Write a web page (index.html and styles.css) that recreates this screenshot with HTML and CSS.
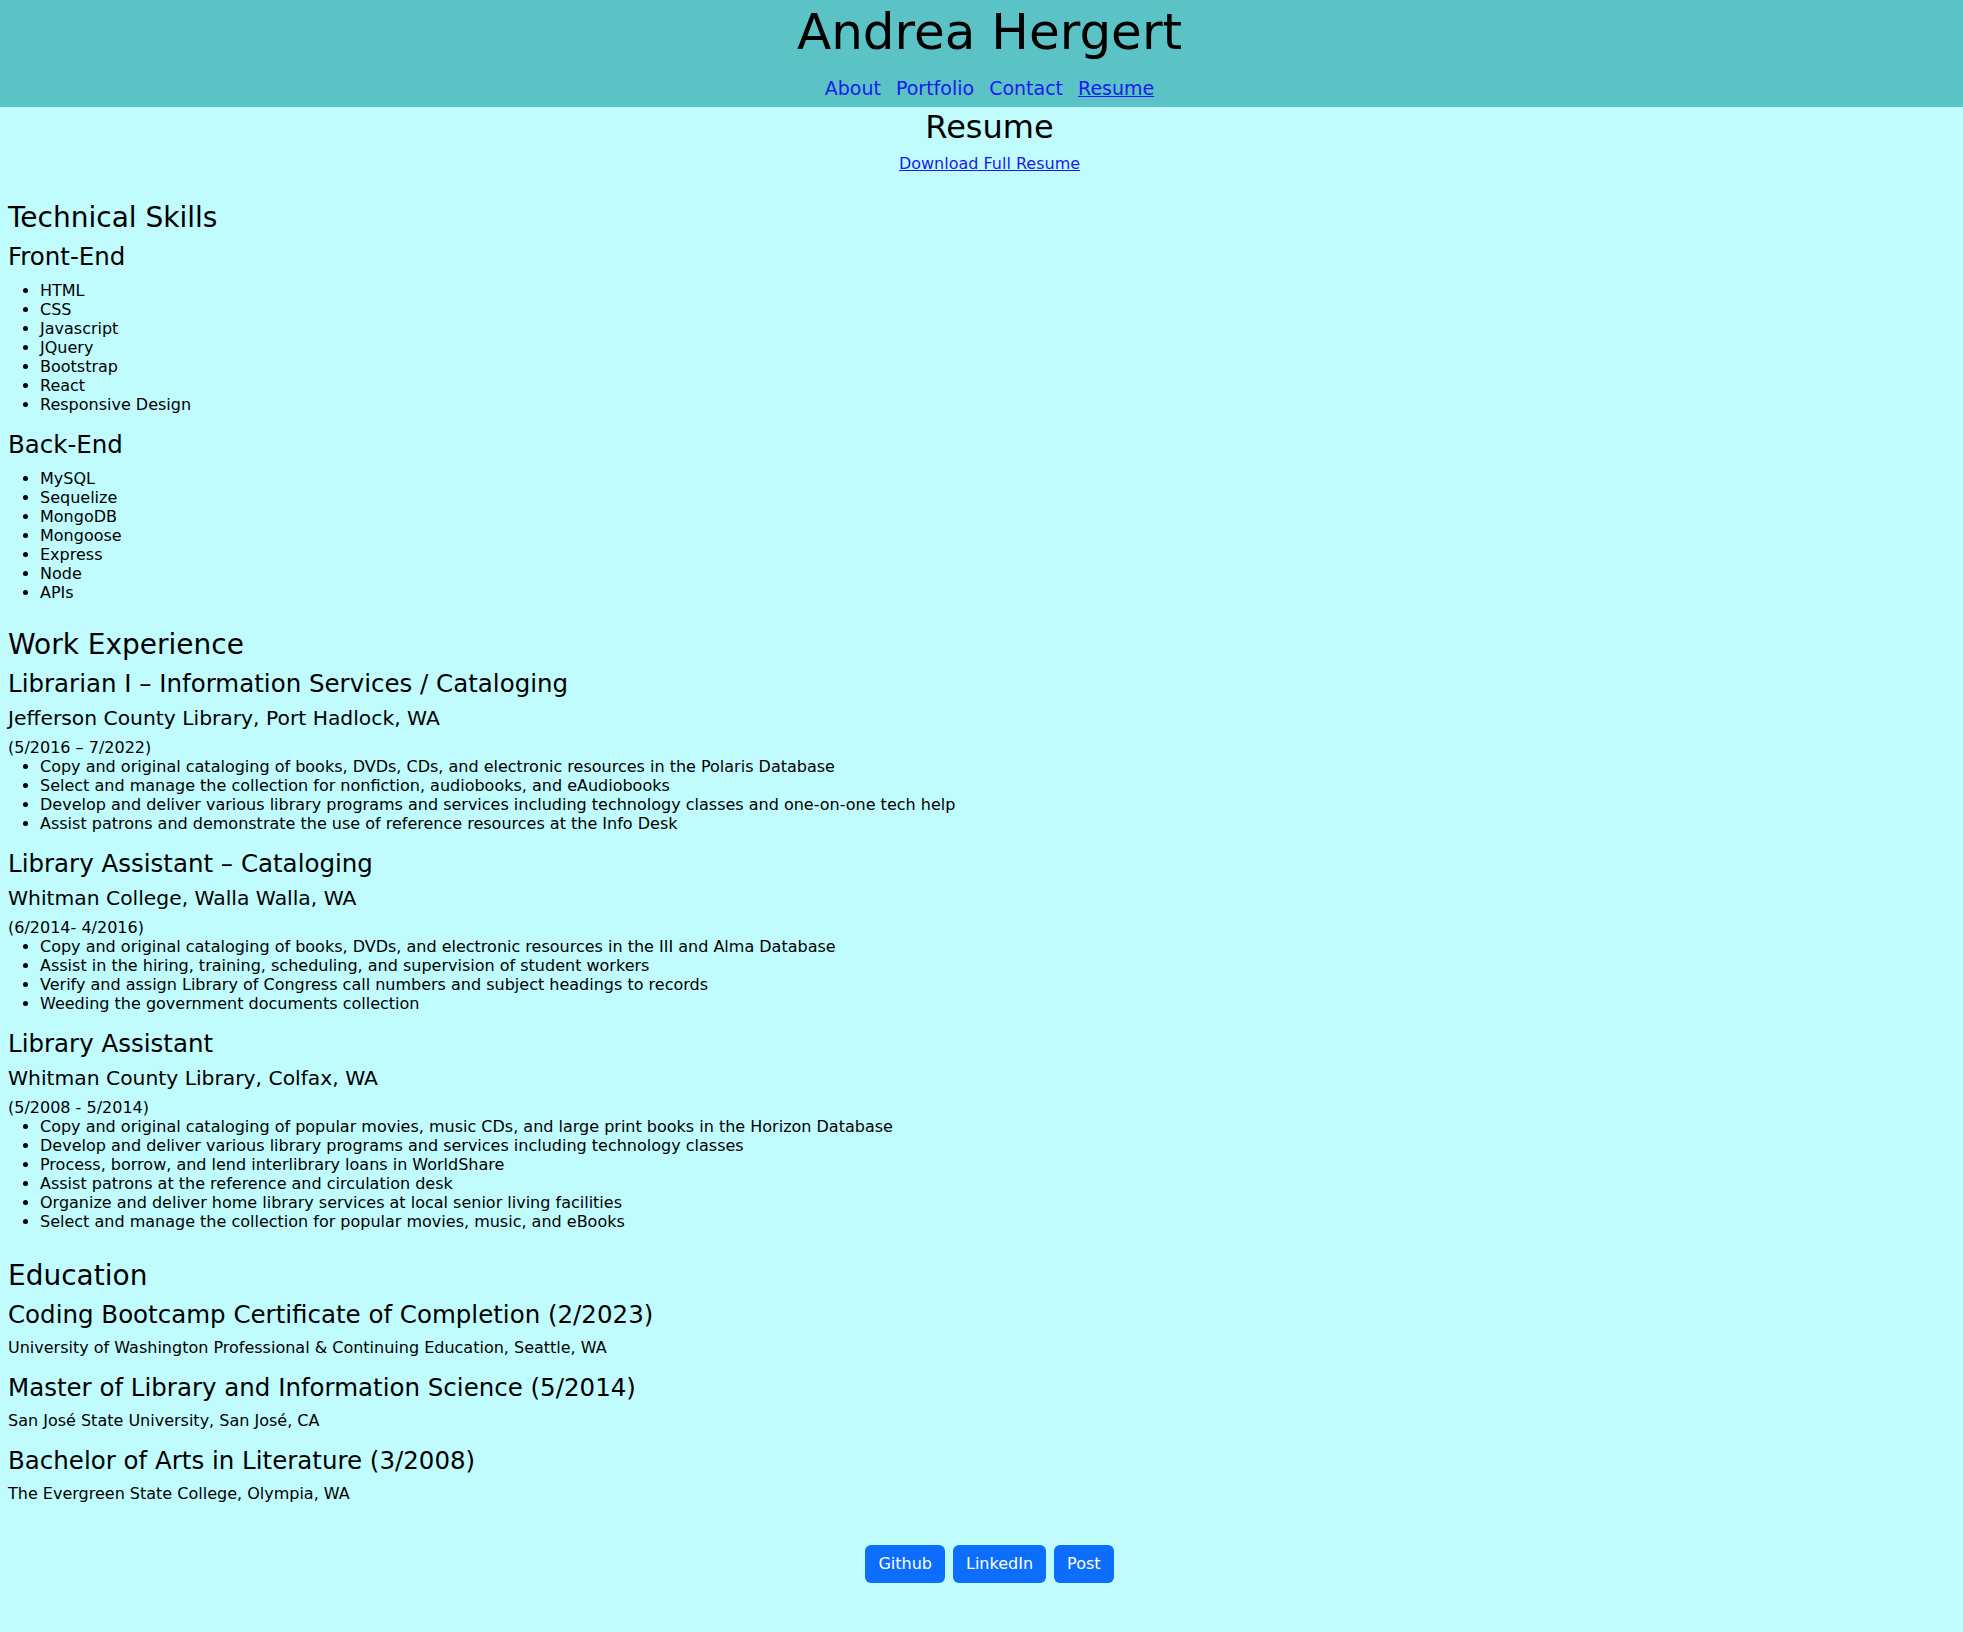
FILE: index.html
```html
<!DOCTYPE html>
<html lang="en">
<head>
<meta charset="utf-8">
<title>Andrea Hergert - Resume</title>
<link rel="stylesheet" href="styles.css">
</head>
<body>
<header class="site-header">
  <h1 class="site-title">Andrea Hergert</h1>
  <nav class="site-nav">
    <a href="#" class="nav-link">About</a>
    <a href="#" class="nav-link">Portfolio</a>
    <a href="#" class="nav-link">Contact</a>
    <a href="#" class="nav-link active">Resume</a>
  </nav>
</header>
<main class="resume">
  <div class="page-head">
    <h2 class="page-title">Resume</h2>
    <a href="#" class="download">Download Full Resume</a>
  </div>

  <section class="section">
    <h2 class="section-title">Technical Skills</h2>
    <div class="group">
      <h3 class="group-title">Front-End</h3>
      <ul class="list skill-list">
        <li>HTML</li>
        <li>CSS</li>
        <li>Javascript</li>
        <li>JQuery</li>
        <li>Bootstrap</li>
        <li>React</li>
        <li>Responsive Design</li>
      </ul>
    </div>
    <div class="group">
      <h3 class="group-title">Back-End</h3>
      <ul class="list skill-list">
        <li>MySQL</li>
        <li>Sequelize</li>
        <li>MongoDB</li>
        <li>Mongoose</li>
        <li>Express</li>
        <li>Node</li>
        <li>APIs</li>
      </ul>
    </div>
  </section>

  <section class="section">
    <h2 class="section-title">Work Experience</h2>
    <div class="group">
      <h3 class="group-title">Librarian I – Information Services / Cataloging</h3>
      <h4 class="org">Jefferson County Library, Port Hadlock, WA</h4>
      <p class="date">(5/2016 – 7/2022)</p>
      <ul class="list">
        <li>Copy and original cataloging of books, DVDs, CDs, and electronic resources in the Polaris Database</li>
        <li>Select and manage the collection for nonfiction, audiobooks, and eAudiobooks</li>
        <li>Develop and deliver various library programs and services including technology classes and one-on-one tech help</li>
        <li>Assist patrons and demonstrate the use of reference resources at the Info Desk</li>
      </ul>
    </div>
    <div class="group">
      <h3 class="group-title">Library Assistant – Cataloging</h3>
      <h4 class="org">Whitman College, Walla Walla, WA</h4>
      <p class="date">(6/2014- 4/2016)</p>
      <ul class="list">
        <li>Copy and original cataloging of books, DVDs, and electronic resources in the III and Alma Database</li>
        <li>Assist in the hiring, training, scheduling, and supervision of student workers</li>
        <li>Verify and assign Library of Congress call numbers and subject headings to records</li>
        <li>Weeding the government documents collection</li>
      </ul>
    </div>
    <div class="group">
      <h3 class="group-title">Library Assistant</h3>
      <h4 class="org">Whitman County Library, Colfax, WA</h4>
      <p class="date">(5/2008 - 5/2014)</p>
      <ul class="list">
        <li>Copy and original cataloging of popular movies, music CDs, and large print books in the Horizon Database</li>
        <li>Develop and deliver various library programs and services including technology classes</li>
        <li>Process, borrow, and lend interlibrary loans in WorldShare</li>
        <li>Assist patrons at the reference and circulation desk</li>
        <li>Organize and deliver home library services at local senior living facilities</li>
        <li>Select and manage the collection for popular movies, music, and eBooks</li>
      </ul>
    </div>
  </section>

  <section class="section section-edu">
    <h2 class="section-title">Education</h2>
    <div class="group">
      <h3 class="group-title">Coding Bootcamp Certificate of Completion (2/2023)</h3>
      <p class="school">University of Washington Professional &amp; Continuing Education, Seattle, WA</p>
    </div>
    <div class="group">
      <h3 class="group-title">Master of Library and Information Science (5/2014)</h3>
      <p class="school">San José State University, San José, CA</p>
    </div>
    <div class="group">
      <h3 class="group-title">Bachelor of Arts in Literature (3/2008)</h3>
      <p class="school">The Evergreen State College, Olympia, WA</p>
    </div>
  </section>
</main>
<footer class="site-footer">
  <a href="#" class="btn">Github</a>
  <a href="#" class="btn">LinkedIn</a>
  <a href="#" class="btn">Post</a>
</footer>
</body>
</html>
```

FILE: styles.css
```css
html, body {
  margin: 0;
  padding: 0;
}
body {
  background: #c0fcfe;
  color: #000;
  font-family: "DejaVu Sans", "Liberation Sans", sans-serif;
  font-size: 16px;
  line-height: 19px;
  min-height: 1632px;
}
.site-header {
  background: #5bc2c6;
  height: 107px;
  padding-left: 16px;
  text-align: center;
  display: flex;
  flex-direction: column;
  align-items: center;
}
.site-title {
  margin: 0;
  font-weight: normal;
  font-size: 50px;
  line-height: 64px;
}
.site-nav {
  display: flex;
  gap: 15px;
  justify-content: center;
  margin-top: 12px;
}
.nav-link {
  color: #1a1aee;
  text-decoration: none;
  font-size: 19px;
  line-height: 24px;
}
.nav-link.active {
  text-decoration: underline;
}
.resume {
  padding: 0 8px;
}
.page-head {
  text-align: center;
  padding-top: 1px;
  padding-left: 16px;
}
.page-title {
  margin: 0;
  font-weight: normal;
  font-size: 32px;
  line-height: 38px;
}
.download {
  display: inline-block;
  margin-top: 8px;
  color: #1a1aee;
  font-size: 16px;
  line-height: 19px;
}
.section {
  margin-top: 27px;
}
.section + .section {
  margin-top: 25px;
}
.section + .section-edu {
  margin-top: 27px;
}
.section-title {
  margin: 0;
  font-weight: normal;
  font-size: 28px;
  line-height: 36px;
}
.group {
  margin-top: 6px;
}
.group + .group {
  margin-top: 16px;
}
.group-title {
  margin: 0;
  font-weight: normal;
  font-size: 24.5px;
  line-height: 29px;
}
.org {
  margin: 8px 0 0;
  font-weight: normal;
  font-size: 20.3px;
  line-height: 24px;
}
.date {
  margin: 8px 0 0;
}
.list {
  margin: 0;
  padding-left: 32px;
}
.skill-list {
  margin-top: 10px;
}
.school {
  margin: 9px 0 0;
}
.site-footer {
  display: flex;
  justify-content: center;
  gap: 8px;
  margin-top: 42px;
  padding-left: 16px;
}
.btn {
  background: #0d6efd;
  color: #fff;
  text-decoration: none;
  font-size: 16px;
  line-height: 24px;
  padding: 7px 13px;
  border-radius: 6px;
}
```
